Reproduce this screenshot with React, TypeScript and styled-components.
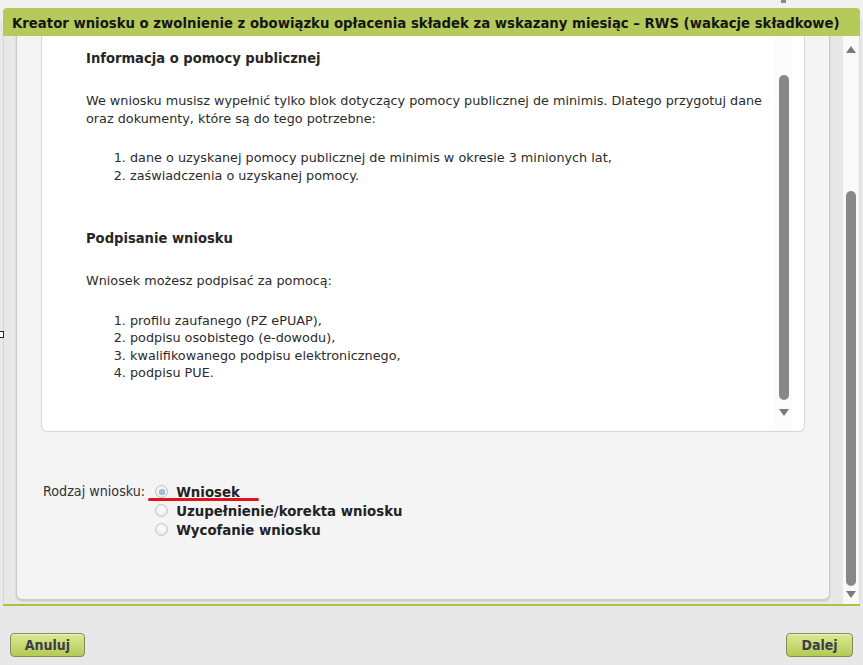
import React from "react";
import styled, { createGlobalStyle } from "styled-components";

const GlobalStyle = createGlobalStyle`
  html, body { margin: 0; padding: 0; }
  body {
    background: #e8e8e8;
    font-family: "DejaVu Sans", sans-serif;
    color: #2b2b2b;
  }
`;

const Page = styled.div`
  position: relative;
  width: 863px;
  height: 665px;
  overflow: hidden;
  background: linear-gradient(#f0f0f0 0, #f0f0f0 20px, #e8e8e8 20px);
`;

const TopMark = styled.div`
  position: absolute;
  left: 781px;
  top: 0;
  width: 5px;
  height: 3px;
  background: #8a8a8a;
`;

const EdgeBox = styled.div`
  position: absolute;
  left: -3px;
  top: 331px;
  width: 5px;
  height: 5px;
  border: 1px solid #222;
  background: #fff;
`;

const Dialog = styled.div`
  margin: 8px 3px 0 3px;
  width: 857px;
`;

const Header = styled.div`
  height: 28px;
  line-height: 29px;
  background: #b5ca5b;
  border-radius: 4px 4px 0 0;
  padding-left: 9px;
  font-family: "DejaVu Sans Condensed", "DejaVu Sans", sans-serif;
  font-size: 14.75px;
  font-weight: bold;
  color: #161616;
  white-space: nowrap;
`;

const Body = styled.div`
  display: flex;
  height: 570px;
  background: #e8e8e8;
  border-left: 1px solid #d6d6d6;
  border-bottom: 2px solid #a9c23f;
  box-sizing: border-box;
`;

const Card = styled.div`
  margin-left: 12px;
  width: 814px;
  height: 564px;
  box-sizing: border-box;
  background: #f4f4f4;
  border: 1px solid #c9c9c9;
  border-top: none;
  border-radius: 0 0 6px 6px;
  box-shadow: 0 1px 2px rgba(0, 0, 0, 0.18);
  padding: 0 24px;
`;

const Panel = styled.div`
  display: flex;
  height: 396px;
  box-sizing: border-box;
  background: #ffffff;
  border: 1px solid #d6d6d6;
  border-top: none;
  border-radius: 0 0 6px 6px;
`;

const Content = styled.div`
  flex: 1;
  padding: 12px 0 0 44px;
  font-size: 12.8px;
  line-height: 17.5px;
  color: #2b2b2b;
`;

const Heading = styled.h3`
  margin: 0 0 24px 0;
  font-family: "DejaVu Sans Condensed", "DejaVu Sans", sans-serif;
  font-size: 14.6px;
  line-height: 20px;
  font-weight: bold;
  color: #262626;
`;

const Para = styled.p`
  margin: 0 0 22px 0;
`;

const List = styled.ol<{ $after: number }>`
  margin: 0 0 ${(p) => p.$after}px 0;
  padding-left: 44px;
`;

const Arrow = styled.div<{ $down?: boolean }>`
  width: 0;
  height: 0;
  border-left: 5px solid transparent;
  border-right: 5px solid transparent;
  ${(p) =>
    p.$down
      ? "border-top: 7px solid #7a7a7a;"
      : "border-bottom: 7px solid #7a7a7a;"}
`;

const Thumb = styled.div<{ $mt: number; $h: number }>`
  margin-top: ${(p) => p.$mt}px;
  width: 10px;
  height: ${(p) => p.$h}px;
  border-radius: 5px;
  background: #888888;
`;

const InnerScroll = styled.div`
  width: 17px;
  margin-right: 12px;
  display: flex;
  flex-direction: column;
  align-items: center;
  background: #fbfbfb;
  padding-top: 39px;
  box-sizing: border-box;
  gap: 9px;
`;

const Gap = styled.div`
  width: 13px;
`;

const OuterScroll = styled.div`
  width: 16px;
  display: flex;
  flex-direction: column;
  align-items: center;
  background: #f9f9f9;
  border-right: 1px solid #dcdcdc;
  padding-top: 10px;
`;

const FormRow = styled.div`
  display: flex;
  margin-top: 50px;
  padding-left: 2px;
  font-family: "DejaVu Sans Condensed", "DejaVu Sans", sans-serif;
  font-size: 14.2px;
`;

const FormLabel = styled.div`
  line-height: 19px;
  color: #333;
  margin-right: 10px;
`;

const Options = styled.div`
  display: flex;
  flex-direction: column;
  position: relative;
`;

const Option = styled.label`
  display: flex;
  align-items: center;
  height: 19px;
  line-height: 19px;
  font-size: 14.8px;
  font-weight: bold;
  color: #222;
  gap: 8px;
`;

const Radio = styled.span<{ $checked?: boolean }>`
  width: 13px;
  height: 13px;
  border-radius: 50%;
  border: 1px solid #c2c2c2;
  background: radial-gradient(circle at 50% 40%, #ffffff, #e2e2e2);
  display: flex;
  align-items: center;
  justify-content: center;
  box-sizing: border-box;
  &::after {
    content: "";
    display: ${(p) => (p.$checked ? "block" : "none")};
    width: 6px;
    height: 6px;
    border-radius: 50%;
    background: #a9bfd6;
    box-shadow: inset 0 0 1px #7f9ab8;
  }
`;

const Underline = styled.div`
  position: absolute;
  left: -7px;
  top: 16px;
  width: 111px;
  height: 3px;
  border-radius: 2px;
  background: #e1141c;
`;

const Footer = styled.div`
  display: flex;
  justify-content: space-between;
  padding: 0 7px;
  margin-top: 27px;
`;

const Button = styled.button<{ $w: number }>`
  width: ${(p) => p.$w}px;
  height: 24px;
  border: 1px solid #7f8d5c;
  border-radius: 4px;
  background: linear-gradient(#dbe992, #b4ca54);
  font-family: "DejaVu Sans Condensed", "DejaVu Sans", sans-serif;
  font-weight: bold;
  font-size: 14px;
  color: #3c3c4c;
  padding: 0;
  box-shadow: inset 0 1px 0 rgba(255, 255, 255, 0.5);
`;

export default function App() {
  return (
    <>
      <GlobalStyle />
      <Page>
        <TopMark />
        <EdgeBox />
        <Dialog>
          <Header>
            Kreator wniosku o zwolnienie z obowiązku opłacenia składek za wskazany miesiąc – RWS (wakacje składkowe)
          </Header>
          <Body>
            <Card>
              <Panel>
                <Content>
                  <Heading>Informacja o pomocy publicznej</Heading>
                  <Para>
                    We wniosku musisz wypełnić tylko blok dotyczący pomocy publicznej de minimis. Dlatego przygotuj dane
                    <br />
                    oraz dokumenty, które są do tego potrzebne:
                  </Para>
                  <List $after={44}>
                    <li>dane o uzyskanej pomocy publicznej de minimis w okresie 3 minionych lat,</li>
                    <li>zaświadczenia o uzyskanej pomocy.</li>
                  </List>
                  <Heading>Podpisanie wniosku</Heading>
                  <Para>Wniosek możesz podpisać za pomocą:</Para>
                  <List $after={0}>
                    <li>profilu zaufanego (PZ ePUAP),</li>
                    <li>podpisu osobistego (e-dowodu),</li>
                    <li>kwalifikowanego podpisu elektronicznego,</li>
                    <li>podpisu PUE.</li>
                  </List>
                </Content>
                <InnerScroll>
                  <Thumb $mt={0} $h={325} />
                  <Arrow $down />
                </InnerScroll>
              </Panel>
              <FormRow>
                <FormLabel>Rodzaj wniosku:</FormLabel>
                <Options>
                  <Underline />
                  <Option>
                    <Radio $checked />
                    Wniosek
                  </Option>
                  <Option>
                    <Radio />
                    Uzupełnienie/korekta wniosku
                  </Option>
                  <Option>
                    <Radio />
                    Wycofanie wniosku
                  </Option>
                </Options>
              </FormRow>
            </Card>
            <Gap />
            <OuterScroll>
              <Arrow />
              <Thumb $mt={138} $h={395} />
              <Arrow $down style={{ marginTop: 5 }} />
            </OuterScroll>
          </Body>
          <Footer>
            <Button $w={75}>Anuluj</Button>
            <Button $w={67}>Dalej</Button>
          </Footer>
        </Dialog>
      </Page>
    </>
  );
}
